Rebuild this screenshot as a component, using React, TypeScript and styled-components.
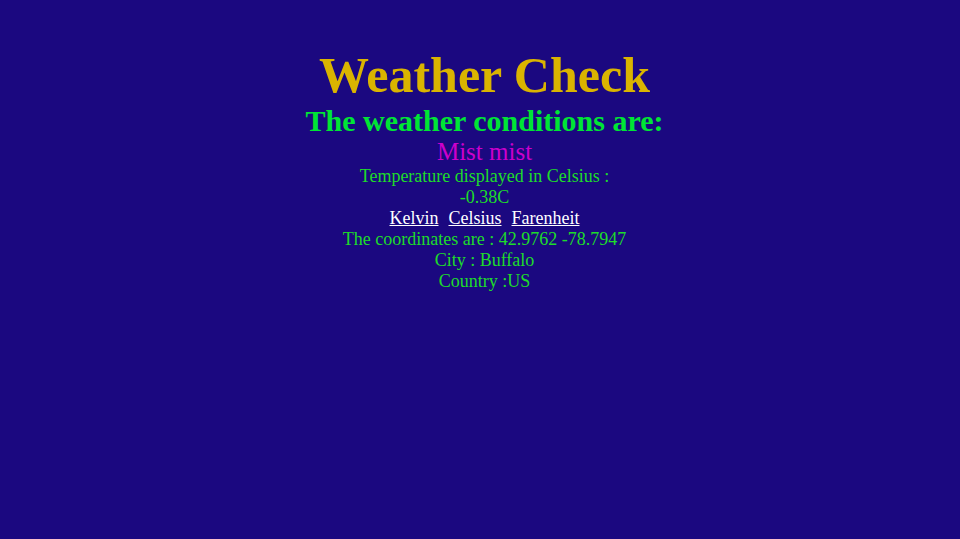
import styled, { createGlobalStyle } from "styled-components"

const Global = createGlobalStyle`
    html, body {
        margin: 0;
        padding: 0;
        background: #1b0880;
        font-family: "Liberation Serif", "Times New Roman", serif;
    }
`

const Page = styled.main`
    min-height: 539px;
    display: flex;
    flex-direction: column;
    align-items: center;
    text-align: center;
    padding: 46px 0 0 9px;
    box-sizing: border-box;
    color: #1edc2a;
    font-size: 18px;
`

const Title = styled.h1`
    margin: 0;
    font-size: 50px;
    font-weight: bold;
    color: #dab400;
    line-height: 58px;
`

const Subtitle = styled.h2`
    margin: 0;
    font-size: 30px;
    font-weight: bold;
    color: #00e535;
    line-height: 34px;
`

const Condition = styled.p`
    margin: 0;
    font-size: 25px;
    color: #cc00cc;
    line-height: 28px;
`

const Line = styled.p`
    margin: 0;
    line-height: 21px;
`

const Units = styled.div`
    display: flex;
    gap: 10px;
    line-height: 21px;
    a {
        color: #ffffff;
        text-decoration: underline;
    }
`

export default function App() {
    return (
        <>
            <Global />
            <Page>
                <Title>Weather Check</Title>
                <Subtitle>The weather conditions are:</Subtitle>
                <Condition>Mist mist</Condition>
                <Line>Temperature displayed in Celsius :</Line>
                <Line>-0.38C</Line>
                <Units>
                    <a href="#">Kelvin</a>
                    <a href="#">Celsius</a>
                    <a href="#">Farenheit</a>
                </Units>
                <Line>The coordinates are : 42.9762 -78.7947</Line>
                <Line>City : Buffalo</Line>
                <Line>Country :US</Line>
            </Page>
        </>
    )
}
